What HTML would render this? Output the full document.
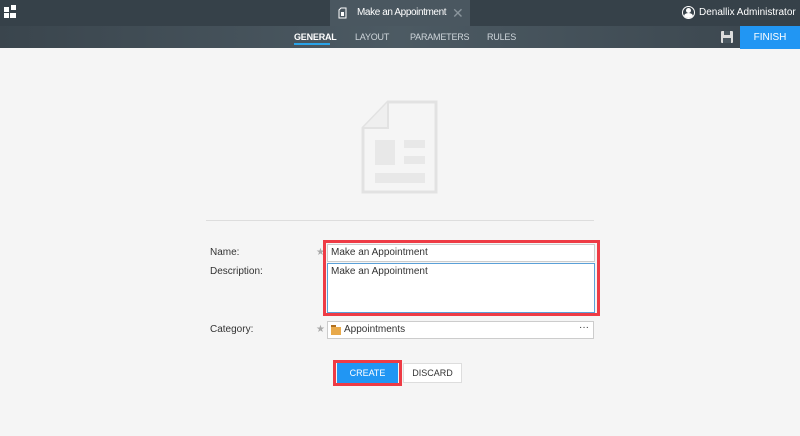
<!DOCTYPE html>
<html><head><meta charset="utf-8"><style>
*{box-sizing:border-box;margin:0;padding:0}
body{width:800px;height:436px;background:#f5f5f5;font-family:"Liberation Sans",sans-serif;overflow:hidden;position:relative;color:#333}
.top{position:absolute;left:0;top:0;width:800px;height:26px;background:#364149}
.nav{position:absolute;left:0;top:26px;width:800px;height:22px;background:linear-gradient(90deg,#3a454d,#4c5a63 50%,#3a454d)}
.tab{position:absolute;left:330px;top:0;width:140px;height:26px;background:#4a5760;color:#fff;font-size:10px;line-height:26px;white-space:nowrap}
.t{position:absolute;color:#fff;font-size:9px;top:32px;letter-spacing:-.2px}
.abs{position:absolute;white-space:nowrap}
.lbl{position:absolute;left:210px;font-size:10px;color:#333}
.inp{position:absolute;left:327px;background:#fff;border:1px solid #ccc;font-size:10px;padding:2px 3px}
.star{position:absolute;left:316px;color:#aaa;font-size:10px}
</style></head><body>
<div class="top"></div>
<div class="nav"></div>
<div class="abs" style="left:4px;top:7px;width:5px;height:5px;background:#fff"></div>
<div class="abs" style="left:11px;top:5px;width:5px;height:5px;background:#fff"></div>
<div class="abs" style="left:4px;top:13px;width:5px;height:5px;background:#fff"></div>
<div class="abs" style="left:10px;top:13px;width:6px;height:5px;background:#fff"></div>
<div class="tab">
<svg class="abs" style="left:8px;top:7px" width="9" height="12"><path d="M1 3L3 1H8V11H1Z" fill="none" stroke="#fff"/><rect x="3" y="5" width="3" height="4" fill="#fff"/></svg>
<span class="abs" style="left:27px;top:0;letter-spacing:-.4px">Make an Appointment</span>
<span class="abs" style="left:122px;top:0;font-size:14px;color:#8a959c">✕</span></div>
<div class="abs" style="left:682px;top:6px;width:13px;height:13px;border-radius:50%;border:1.5px solid #fff;overflow:hidden"><div style="width:5px;height:5px;border-radius:50%;background:#fff;margin:1px auto 0"></div><div style="width:9px;height:6px;border-radius:50%;background:#fff;margin:0 auto"></div></div>
<div class="abs" style="left:699px;top:7px;color:#fff;font-size:10px">Denallix Administrator</div>
<div class="t" style="left:294px;font-weight:bold">GENERAL</div>
<div class="abs" style="left:294px;top:43px;width:36px;height:2px;background:#29a3e8"></div>
<div class="t" style="left:355px;color:#cfd6db">LAYOUT</div>
<div class="t" style="left:410px;color:#cfd6db">PARAMETERS</div>
<div class="t" style="left:487px;color:#cfd6db">RULES</div>
<svg class="abs" style="left:721px;top:31px" width="12" height="12"><rect x="0" y="0" width="12" height="12" rx="1" fill="#ddd"/><rect x="3" y="0" width="6" height="4" fill="#4a5760"/><rect x="2" y="7" width="8" height="5" fill="#4a5760"/></svg>
<div class="abs" style="left:740px;top:26px;width:60px;height:23px;background:#2196f3;color:#fff;font-size:10px;text-align:center;line-height:23px">FINISH</div>
<svg class="abs" style="left:361px;top:100px" width="80" height="96"><path d="M27 2H75V92H2V28Z" fill="#f5f5f5" stroke="#e2e2e2" stroke-width="3"/><path d="M27 2V28H2" fill="#efefef" stroke="#e2e2e2" stroke-width="2"/><rect x="14" y="40" width="20" height="25" fill="#e8e8e8"/><rect x="43" y="40" width="21" height="8" fill="#e8e8e8"/><rect x="43" y="56" width="21" height="8" fill="#e8e8e8"/><rect x="14" y="73" width="50" height="10" fill="#e8e8e8"/></svg>
<div class="abs" style="left:206px;top:220px;width:388px;height:1px;background:#ddd"></div>
<div class="lbl" style="top:247px">Name:</div>
<div class="lbl" style="top:266px">Description:</div>
<div class="lbl" style="top:324px">Category:</div>
<div class="star" style="top:247px">★</div>
<div class="star" style="top:324px">★</div>
<div class="abs" style="left:323px;top:240px;width:277px;height:76px;border:3px solid #ee3b45"></div>
<div class="inp" style="top:244px;width:268px;height:18px">Make an Appointment</div>
<div class="inp" style="top:263px;width:268px;height:50px;border-color:#5aa0d8">Make an Appointment</div>
<div class="inp" style="top:321px;width:267px;height:18px;padding-left:16px">Appointments<span style="position:absolute;right:4px;top:0">···</span><div class="abs" style="left:3px;top:5px;width:10px;height:8px;background:#e8a94a"></div><div class="abs" style="left:3px;top:3px;width:5px;height:2px;background:#b07020"></div></div>
<div class="abs" style="left:333px;top:360px;width:69px;height:26px;border:3px solid #ee3b45"></div>
<div class="abs" style="left:337px;top:363px;width:61px;height:20px;background:#2196f3;color:#fff;font-size:9px;text-align:center;line-height:20px">CREATE</div>
<div class="abs" style="left:403px;top:363px;width:59px;height:20px;background:#fff;border:1px solid #ddd;font-size:9px;text-align:center;line-height:18px;color:#333">DISCARD</div>
</body></html>
